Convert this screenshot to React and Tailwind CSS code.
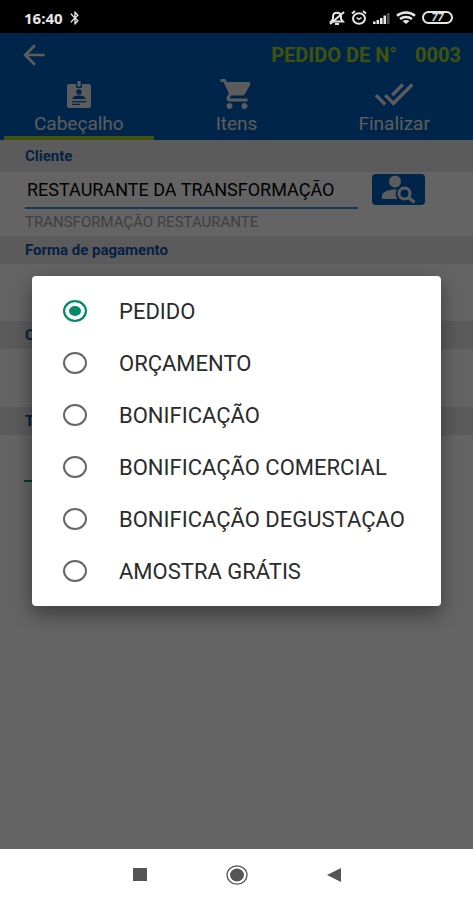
import { useState } from "react";
import { MdArrowBack, MdBluetooth, MdDoneAll, MdShoppingCart } from "react-icons/md";

const ORDER_TYPES = [
  "PEDIDO",
  "ORÇAMENTO",
  "BONIFICAÇÃO",
  "BONIFICAÇÃO COMERCIAL",
  "BONIFICAÇÃO DEGUSTAÇAO",
  "AMOSTRA GRÁTIS",
];

function BadgeIcon({ className }) {
  return (
    <svg viewBox="0 0 24 27" className={className} fill="currentColor" aria-hidden="true">
      <path
        fillRule="evenodd"
        d="M2 3h7v2.500c0 1 .8 1.500 1.500 1.500h3c.7 0 1.500-.5 1.500-1.500V3h7c1.100 0 2 .9 2 2v20c0 1.100-.9 2-2 2H2c-1.100 0-2-.9-2-2V5c0-1.100.9-2 2-2zm10 5.200a2.700 2.700 0 1 0 0 5.400 2.700 2.700 0 0 0 0-5.400zM5.500 18h13c0-2.500-3-3.500-6.500-3.500S5.500 15.500 5.500 18zM5 20v1.300h14V20H5zm0 2.700V24h8v-1.300H5z"
      />
      <rect x="10.300" y="0" width="3.400" height="5.500" rx="0.800" />
    </svg>
  );
}

function PersonSearchIcon({ className }) {
  return (
    <svg viewBox="0 0 34 29" className={className} fill="none" aria-hidden="true">
      <circle cx="13" cy="6.500" r="6" fill="currentColor" />
      <path d="M0 24v-3c0-4 6-6.500 13-6.500h2c-2 3-1.500 7 .5 9.500z" fill="currentColor" />
      <circle cx="22.500" cy="18.500" r="5.500" stroke="currentColor" strokeWidth="3" />
      <path d="M26.500 22.500l6 5" stroke="currentColor" strokeWidth="3.500" />
    </svg>
  );
}

function MutedBellIcon() {
  return (
    <svg viewBox="0 0 16 14" className="h-3.5 w-4" fill="none" stroke="currentColor" strokeWidth="2" aria-hidden="true">
      <path d="M2 10.500h12l-2-2.500V5.500C12 3 10.500 1.800 8 1.800S4 3 4 5.500V8z" />
      <path d="M6 13h4M1 13L15 1" />
    </svg>
  );
}

function AlarmIcon() {
  return (
    <svg viewBox="0 0 16 15" className="h-[15px] w-4" fill="none" stroke="currentColor" strokeWidth="2" aria-hidden="true">
      <ellipse cx="8" cy="8.500" rx="6" ry="5.300" />
      <path d="M1 3.500L4 1M15 3.500L12 1" />
      <path d="M5.500 7.500L8 9.300l2.500-1.800" strokeWidth="1.500" />
    </svg>
  );
}

function SignalIcon() {
  return (
    <svg viewBox="0 0 17 12" className="h-3 w-[17px]" fill="currentColor" aria-hidden="true">
      <rect x="0" y="9.500" width="2.600" height="2.500" />
      <rect x="3.500" y="8" width="2.600" height="4" />
      <rect x="7" y="6" width="2.600" height="6" />
      <rect x="10.500" y="3.500" width="2.600" height="8.500" />
      <rect x="14" y="1" width="2.600" height="11" opacity="0.350" />
    </svg>
  );
}

function WifiIcon() {
  return (
    <svg viewBox="0 0 20 13" className="h-[13px] w-5" fill="none" stroke="currentColor" strokeWidth="2.500" aria-hidden="true">
      <path d="M1 4.800c5-4.300 13-4.300 18 0M4 8c3.500-2.800 8.500-2.800 12 0" />
      <path d="M6.500 10c2-1.500 5-1.500 7 0L10 13z" fill="currentColor" stroke="none" />
    </svg>
  );
}

function StatusBar() {
  return (
    <div className="flex h-[33px] items-center justify-between bg-black pt-0.5 pr-5 pl-6 text-[#e6e6e6]">
      <div className="flex items-center gap-1">
        <span className="font-['Open_Sans',sans-serif] text-[15px] leading-5 font-bold">16:40</span>
        <MdBluetooth className="h-4 w-4" />
      </div>
      <div className="flex items-center gap-1.5">
        <MutedBellIcon />
        <AlarmIcon />
        <SignalIcon />
        <WifiIcon />
        <span className="flex h-[13px] w-[31px] items-center justify-center rounded-full border-2 border-current text-[11px] leading-none font-bold italic">
          77
        </span>
      </div>
    </div>
  );
}

function Tab({ icon, label, active = false }) {
  return (
    <button type="button" role="tab" aria-selected={active} className="flex flex-1 flex-col items-center">
      <span className="flex h-9 items-center">{icon}</span>
      <span className="text-[19px] leading-6">{label}</span>
      <span className={`h-1 w-[150px] max-w-full ${active ? "bg-[#a5cc1a]" : ""}`} />
    </button>
  );
}

function SectionTitle({ children, className = "h-7" }) {
  return (
    <h2 className={`flex items-center bg-[#e3e3e3] pl-[25px] text-[15px] font-bold text-[#0b54a5] ${className}`}>
      {children}
    </h2>
  );
}

export default function App() {
  const [type, setType] = useState("PEDIDO");
  const [client, setClient] = useState("RESTAURANTE DA TRANSFORMAÇÃO");

  return (
    <div className="flex min-h-screen flex-col bg-white font-[Roboto,sans-serif]">
      <StatusBar />

      <main className="relative flex flex-1 flex-col bg-[#fafafa]">
        <header className="bg-[#005cb9] text-[#e6e6e6]">
          <div className="flex h-[43px] items-center justify-between pr-3 pl-[18px]">
            <button type="button" aria-label="Voltar">
              <MdArrowBack className="h-8 w-8" />
            </button>
            <h1 className="flex gap-[18px] text-[20px] font-bold text-[#a5cc1a]">
              <span>PEDIDO DE N°</span>
              <span>0003</span>
            </h1>
          </div>
          <div role="tablist" className="flex">
            <Tab active label="Cabeçalho" icon={<BadgeIcon className="h-[27px] w-6" />} />
            <Tab label="Itens" icon={<MdShoppingCart className="h-9 w-9" />} />
            <Tab label="Finalizar" icon={<MdDoneAll className="h-10 w-10" />} />
          </div>
        </header>

        <SectionTitle className="h-8">
          <label htmlFor="client">Cliente</label>
        </SectionTitle>
        <div className="flex h-16 items-start gap-3.5 pr-12 pl-[25px]">
          <div className="min-w-0 flex-1">
            <input
              id="client"
              value={client}
              onChange={(e) => setClient(e.target.value)}
              className="h-[37px] w-full border-b-2 border-[#3a8ccc] pl-0.5 text-[18px] text-black outline-none"
            />
            <p className="text-[15px] leading-[26px] text-[#a0a0a0]">TRANSFORMAÇÃO RESTAURANTE</p>
          </div>
          <button
            type="button"
            aria-label="Buscar cliente"
            className="mt-0.5 flex h-[31px] w-[53px] items-center justify-center rounded bg-[#005cb9] text-[#e6e6e6]"
          >
            <PersonSearchIcon className="h-[29px] w-[34px]" />
          </button>
        </div>
        <SectionTitle>Forma de pagamento</SectionTitle>
        <div className="h-[57px]" />
        <SectionTitle>C</SectionTitle>
        <div className="h-[58px]" />
        <SectionTitle>T</SectionTitle>
        <div className="mr-12 ml-6 h-[47px] border-b-2 border-[#009673]" />

        <div className="absolute inset-0 flex items-center bg-black/60 px-8">
          <div
            role="dialog"
            aria-label="Tipo"
            className="w-full rounded-sm bg-white py-[9px] shadow-[0_8px_20px_rgba(0,0,0,0.4)]"
          >
            {ORDER_TYPES.map((item) => (
              <label key={item} className="flex h-[52px] items-center gap-8 pl-[31px] text-[22px] text-[#2b2b2b]">
                <input
                  type="radio"
                  name="type"
                  value={item}
                  checked={type === item}
                  onChange={() => setType(item)}
                  className="h-[22px] w-6 shrink-0 appearance-none rounded-[50%] border-2 border-[#666666] checked:border-[#008a6b] checked:bg-[#008a6b] checked:shadow-[inset_0_0_0_4px_#ffffff]"
                />
                {item}
              </label>
            ))}
          </div>
        </div>
      </main>

      <nav className="flex h-[51px] items-center justify-center text-[#555555]">
        <button type="button" aria-label="Recentes" className="flex flex-none basis-[97px] justify-center">
          <span className="h-[13px] w-3.5 bg-current" />
        </button>
        <button type="button" aria-label="Início" className="flex flex-none basis-[97px] justify-center">
          <svg viewBox="0 0 22 20" className="h-5 w-[22px]" aria-hidden="true">
            <ellipse cx="11" cy="10" rx="10" ry="9.200" fill="none" stroke="currentColor" strokeWidth="1.300" />
            <ellipse cx="11" cy="10" rx="7" ry="6.400" fill="currentColor" />
          </svg>
        </button>
        <button type="button" aria-label="Voltar ao anterior" className="flex flex-none basis-[97px] justify-center">
          <svg viewBox="0 0 14 14" className="h-3.5 w-3.5" fill="currentColor" aria-hidden="true">
            <path d="M0 7L14 0v14z" />
          </svg>
        </button>
      </nav>
    </div>
  );
}
